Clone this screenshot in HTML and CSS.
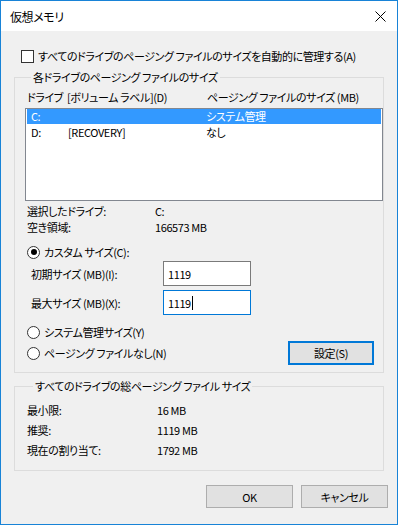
FILE: index.html
```html
<!DOCTYPE html>
<html lang="ja">
<head>
    <meta charset="UTF-8">
    <title>仮想メモリ</title>
    <link rel="stylesheet" href="styles.css">
</head>
<body>
    <div class="window">
        <div class="titlebar">
            <span class="title">仮想メモリ</span>
            <svg class="close" width="11" height="11" viewBox="0 0 11 11">
                <path d="M0.5 0.5 L10.5 10.5 M10.5 0.5 L0.5 10.5" stroke="#000" stroke-width="1"/>
            </svg>
        </div>
        <div class="content">
            <div class="check-row">
                <span class="checkbox"></span>
                <span>すべてのドライブのページング ファイルのサイズを自動的に管理する(A)</span>
            </div>

            <fieldset class="group drives">
                <legend>各ドライブのページング ファイルのサイズ</legend>
                <div class="list-head">
                    <span class="col-drive">ドライブ</span>
                    <span class="col-label">[ボリューム ラベル](D)</span>
                    <span class="col-size">ページング ファイルのサイズ (MB)</span>
                </div>
                <div class="listbox">
                    <div class="row selected">
                        <span class="col-drive">C:</span>
                        <span class="col-label"></span>
                        <span class="col-size">システム管理</span>
                    </div>
                    <div class="row">
                        <span class="col-drive">D:</span>
                        <span class="col-label">[RECOVERY]</span>
                        <span class="col-size">なし</span>
                    </div>
                </div>
                <div class="info">
                    <div class="info-row"><span class="info-key">選択したドライブ:</span><span>C:</span></div>
                    <div class="info-row"><span class="info-key">空き領域:</span><span>166573 MB</span></div>
                </div>
                <div class="radio-row custom">
                    <span class="radio checked"></span>
                    <span>カスタム サイズ(C):</span>
                </div>
                <div class="size-row first">
                    <span class="size-label">初期サイズ (MB)(I):</span>
                    <div class="textbox">1119</div>
                </div>
                <div class="size-row">
                    <span class="size-label">最大サイズ (MB)(X):</span>
                    <div class="textbox focused">1119<span class="caret"></span></div>
                </div>
                <div class="radio-row system">
                    <span class="radio"></span>
                    <span>システム管理サイズ(Y)</span>
                </div>
                <div class="radio-row last">
                    <span class="radio"></span>
                    <span>ページング ファイルなし(N)</span>
                    <button class="btn btn-default set">設定(S)</button>
                </div>
            </fieldset>

            <fieldset class="group totals">
                <legend>すべてのドライブの総ページング ファイル サイズ</legend>
                <div class="total-row"><span class="total-key">最小限:</span><span>16 MB</span></div>
                <div class="total-row"><span class="total-key">推奨:</span><span>1119 MB</span></div>
                <div class="total-row"><span class="total-key">現在の割り当て:</span><span>1792 MB</span></div>
            </fieldset>

            <div class="actions">
                <button class="btn">OK</button>
                <button class="btn">キャンセル</button>
            </div>
        </div>
    </div>
</body>
</html>
```

FILE: styles.css
```css
body {
    margin: 0;
    padding: 0;
    font-family: "Noto Sans CJK JP", "Noto Sans", sans-serif;
    font-size: 11px;
    font-feature-settings: "palt";
    letter-spacing: -0.4px;
    color: #000000;
    background-color: #ffffff;
    white-space: nowrap;
}
.window {
    width: 398px;
    height: 525px;
    box-sizing: border-box;
    border: 1px solid #1883d7;
    display: flex;
    flex-direction: column;
    background-color: #f0f0f0;
}
.titlebar {
    height: 30px;
    background-color: #ffffff;
    display: flex;
    align-items: center;
    justify-content: space-between;
    padding: 0 11px 0 9px;
    font-size: 12px;
}
.close {
    display: block;
}
.content {
    flex: 1;
    padding: 18px 9px 0 13px;
    display: flex;
    flex-direction: column;
}
.check-row {
    display: flex;
    align-items: center;
    height: 14px;
    line-height: 14px;
    margin-left: 7px;
}
.checkbox {
    width: 11px;
    height: 11px;
    border: 1px solid #333333;
    background-color: #ffffff;
    margin-right: 4px;
}
.group {
    margin: 0;
    border: 1px solid #dcdcdc;
    min-width: 0;
    width: 370px;
    box-sizing: border-box;
}
.group legend {
    padding: 0 2px;
    margin-left: 6px;
    line-height: 14px;
}
.drives {
    margin-top: 7px;
    padding: 6px 0 7px 10px;
}
.list-head, .row {
    display: flex;
    height: 14px;
    line-height: 14px;
}
.list-head {
    padding-left: 2px;
}
.col-drive {
    width: 40px;
    flex-shrink: 0;
}
.col-label {
    width: 140px;
    flex-shrink: 0;
}
.listbox {
    margin-top: 4px;
    height: 93px;
    box-sizing: border-box;
    border: 1px solid #828790;
    background-color: #ffffff;
    padding: 0 1px;
}
.row {
    height: 15px;
    line-height: 15px;
    margin-bottom: 1px;
    padding-left: 4px;
}
.row .col-drive {
    width: 37px;
}
.row .col-label {
    width: 138px;
}
.row.selected {
    background-color: #3399ff;
    color: #ffffff;
}
.info {
    margin-top: 2px;
    padding-left: 2px;
}
.info-row, .total-row {
    display: flex;
    height: 16px;
    line-height: 16px;
}
.info-key {
    width: 128px;
}
.radio-row {
    display: flex;
    align-items: center;
    height: 16px;
    line-height: 16px;
    padding-left: 2px;
}
.radio {
    width: 11px;
    height: 11px;
    border: 1px solid #333333;
    border-radius: 50%;
    background-color: #ffffff;
    margin-right: 4px;
    display: flex;
    align-items: center;
    justify-content: center;
}
.radio.checked::after {
    content: "";
    width: 6px;
    height: 6px;
    border-radius: 50%;
    background-color: #000000;
}
.custom {
    margin-top: 9px;
}
.size-row {
    display: flex;
    align-items: center;
    margin-top: 4px;
    padding-left: 6px;
}
.size-row.first {
    margin-top: 1px;
}
.size-label {
    width: 132px;
}
.textbox {
    width: 88px;
    height: 25px;
    box-sizing: border-box;
    border: 1px solid #7a7a7a;
    background-color: #ffffff;
    padding-left: 4px;
    line-height: 22px;
    display: flex;
    align-items: center;
}
.textbox.focused {
    border-color: #0078d7;
}
.caret {
    width: 1px;
    height: 14px;
    margin-left: 1px;
    background-color: #000000;
}
.system {
    margin-top: 9px;
}
.last {
    height: 24px;
    margin-top: 1px;
}
.last .set {
    margin-left: auto;
    margin-right: 9px;
}
.btn {
    width: 87px;
    height: 23px;
    border: 1px solid #adadad;
    background-color: #e1e1e1;
    font-family: inherit;
    font-size: 11px;
    font-feature-settings: "palt";
    letter-spacing: -0.4px;
    color: #000000;
    padding: 0;
}
.btn-default {
    width: 86px;
    height: 24px;
    border: 2px solid #0078d7;
}
.totals {
    margin-top: 6px;
    padding: 7px 0 10px 12px;
}
.total-row {
    height: 20px;
    line-height: 20px;
}
.total-key {
    width: 130px;
}
.actions {
    display: flex;
    justify-content: flex-end;
    gap: 8px;
    margin-top: 14px;
}
```
